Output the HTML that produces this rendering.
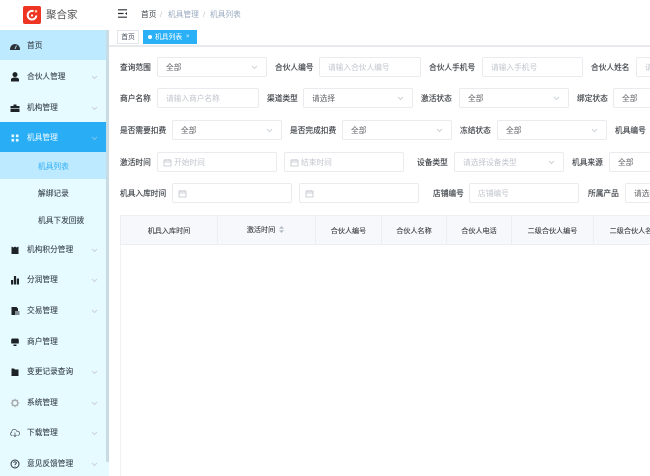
<!DOCTYPE html>
<html lang="zh">
<head>
<meta charset="utf-8">
<title>机具列表</title>
<style>
html,body{margin:0;padding:0;width:650px;height:476px;overflow:hidden;background:#fff}
body{position:relative;font-family:"Liberation Sans","Noto Sans CJK SC",sans-serif;font-size:7.7px;color:#606266}
#w{position:absolute;left:0;top:0;width:650px;height:476px;overflow:hidden;filter:blur(.3px)}
div,span{box-sizing:border-box}
.a{position:absolute;white-space:nowrap}
#side{position:absolute;left:0;top:30px;width:109px;height:446px;background:#e6fbff;overflow:hidden}
#bar{position:absolute;left:106px;top:30px;width:3px;height:432px;background:#c9dbe3}
.m{position:absolute;left:0;width:106px;color:#3a444c;white-space:nowrap;margin-top:1px;-webkit-text-stroke:.1px}
.m b{font-weight:normal;position:absolute;left:27px;top:0}
.m svg.i{position:absolute;left:10px;width:10px;height:10px}
.m svg.c{position:absolute;left:91px;width:7px;height:5px}
.s{position:absolute;left:38px;color:#3a444c;line-height:12px;white-space:nowrap;margin-top:1px;-webkit-text-stroke:.1px}
.l{position:absolute;height:20px;line-height:20px;padding-top:1px;color:#3f4348;white-space:nowrap;-webkit-text-stroke:.15px}
.f{position:absolute;height:20px;background:#fff;border:1px solid #e9ebef;border-radius:2px;line-height:20px;padding-left:8px;color:#606266;white-space:nowrap;overflow:hidden}
.p{color:#c0c4cc}
.f svg.c{position:absolute;right:8px;top:7px;width:7px;height:5px}
.f svg.d{position:absolute;left:5px;top:5px;width:9px;height:9px}
.d2{padding-left:16px}
.th{position:absolute;top:215px;height:30px;background:#f6f8fb;border-right:1px solid #eceef2;border-top:1px solid #eceef2;border-bottom:1px solid #eceef2;line-height:29px;font-size:7.1px;text-align:center;color:#3f4348;-webkit-text-stroke:.12px;white-space:nowrap;overflow:hidden}
</style>
</head>
<body>
<svg style="position:absolute;width:0;height:0">
<defs>
<symbol id="cv" viewBox="0 0 7 5"><path d="M1 1l2.500 2.500L6 1" fill="none" stroke="#cdd3d8" stroke-width="1"/></symbol>
<symbol id="cal" viewBox="0 0 9 9"><path d="M1 2h7v6H1zM1 4h7M3 1v2M6 1v2" fill="none" stroke="#c0c4cc" stroke-width=".8"/></symbol>
</defs>
</svg>
<div id="w">

<!-- top header -->
<svg class="a" style="left:23px;top:6px;width:18px;height:18px" viewBox="0 0 18 18">
<rect width="18" height="18" rx="2" fill="#ee3423"/>
<path d="M10.500 5.200A4.300 4.300 0 1 0 13.300 9.500" fill="none" stroke="#fff" stroke-width="2"/>
<circle cx="13" cy="5.300" r="1.300" fill="#ffc9b0"/>
<circle cx="9" cy="9.500" r="1.100" fill="#fff"/>
</svg>
<div class="a" style="left:46px;top:6px;line-height:18px;font-size:10.500px;color:#555">聚合家</div>
<svg class="a" style="left:118px;top:9px;width:9px;height:9px" viewBox="0 0 9 9"><path d="M0 .8h9M0 4.500h5.500M0 8.200h9" stroke="#2b2f33" stroke-width="1.200" fill="none"/><path d="M9 3L7 4.500 9 6z" fill="#2b2f33"/></svg>
<div class="a" style="left:141px;top:9px;line-height:12px;color:#3f444a">首页</div>
<div class="a" style="left:160px;top:9px;line-height:12px;color:#c0c4cc">/</div>
<div class="a" style="left:168px;top:9px;line-height:12px;color:#97a8be">机具管理</div>
<div class="a" style="left:203px;top:9px;line-height:12px;color:#c0c4cc">/</div>
<div class="a" style="left:210px;top:9px;line-height:12px;color:#97a8be">机具列表</div>

<!-- tabs -->
<div class="a" style="left:109px;top:45px;width:541px;height:2px;background:#e8eaed"></div>
<div class="a" style="left:117px;top:30px;width:22px;height:14px;background:#fff;border:1px solid #e4e7ed;font-size:6.800px;line-height:14px;text-align:center;color:#495060">首页</div>
<div class="a" style="left:143px;top:30px;width:54px;height:14px;background:#29b0f7;color:#fff;font-size:6.800px;line-height:15px;padding-left:12px">机具列表<span class="a" style="left:5px;top:5px;width:4px;height:4px;border-radius:50%;background:#fff"></span><span class="a" style="left:43px;top:0;font-size:6px">×</span></div>

<!-- sidebar -->
<div id="side">
<div class="a" style="left:0;top:0;width:106px;height:30px;background:#bdeaff"></div>
<div class="a" style="left:0;top:92px;width:106px;height:30px;background:#29aef6"></div>
<div class="a" style="left:0;top:122px;width:106px;height:27px;background:#bdeaff"></div>
</div>
<div id="bar"></div>

<div class="m" style="top:39px;height:12px;line-height:12px"><b>首页</b>
<svg class="i" style="top:1px" viewBox="0 0 10 10"><path d="M0 8a5 5 0 0 1 10 0v1H0z" fill="#2b3238"/><path d="M5 8L6.500 4.500" stroke="#bdeaff" stroke-width=".9"/></svg></div>
<div class="m" style="top:70px;height:12px;line-height:12px"><b>合伙人管理</b>
<svg class="i" style="top:1px" viewBox="0 0 10 10"><circle cx="5" cy="2.600" r="2.500" fill="#1d2226"/><path d="M1 9.500V7.500C1 6 3 5.500 5 5.500S9 6 9 7.500v2z" fill="#1d2226"/></svg>
<svg class="c" style="top:4px"><use href="#cv"/></svg></div>
<div class="m" style="top:101px;height:12px;line-height:12px"><b>机构管理</b>
<svg class="i" style="top:1px" viewBox="0 0 10 10"><path d="M3.500 3V1.500h3V3H9.500V5H.5V3zM.5 5.600h9V9H.5z" fill="#1d2226"/></svg>
<svg class="c" style="top:4px"><use href="#cv"/></svg></div>
<div class="m" style="top:131px;height:12px;line-height:12px;color:#dff4ff"><b>机具管理</b>
<svg class="i" style="top:1px" viewBox="0 0 10 10"><path d="M1.500 1.500h2.600v2.600H1.500zM5.900 1.500h2.600v2.600H5.900zM1.500 5.900h2.600v2.600H1.500zM5.900 5.900h2.600v2.600H5.900z" fill="#eaf8ff"/></svg>
<svg class="c" style="top:4px;opacity:.5"><use href="#cv"/></svg></div>
<div class="s" style="top:160px;color:#40b4f6">机具列表</div>
<div class="s" style="top:187px">解绑记录</div>
<div class="s" style="top:214px">机具下发回拨</div>
<div class="m" style="top:243px;height:12px;line-height:12px"><b>机构积分管理</b>
<svg class="i" style="top:1px" viewBox="0 0 10 10"><path d="M1.500 1.500l2 1 1.500-1 1.500 1 2-1V9h-7z" fill="#1d2226"/></svg>
<svg class="c" style="top:4px"><use href="#cv"/></svg></div>
<div class="m" style="top:273px;height:12px;line-height:12px"><b>分润管理</b>
<svg class="i" style="top:1px" viewBox="0 0 10 10"><path d="M1 5h2.200v4.500H1zM3.900 1h2.200v8.500H3.900zM6.800 3.500H9v6H6.800z" fill="#1d2226"/></svg>
<svg class="c" style="top:4px"><use href="#cv"/></svg></div>
<div class="m" style="top:304px;height:12px;line-height:12px"><b>交易管理</b>
<svg class="i" style="top:1px" viewBox="0 0 10 10"><path d="M1.500 1h5l1.500 1.500V5H5.500v4h-4z" fill="#1d2226"/><path d="M6 6h3.500M6 8h3.500" stroke="#1d2226" stroke-width="1"/></svg>
<svg class="c" style="top:4px"><use href="#cv"/></svg></div>
<div class="m" style="top:335px;height:12px;line-height:12px"><b>商户管理</b>
<svg class="i" style="top:1px" viewBox="0 0 10 10"><path d="M2 1.500h6l.8 1V6.500H1.200V2.500z" fill="#1d2226"/><path d="M3.500 7.500h3V9h-3z" fill="#1d2226"/></svg></div>
<div class="m" style="top:365px;height:12px;line-height:12px"><b>变更记录查询</b>
<svg class="i" style="top:1px" viewBox="0 0 10 10"><path d="M1.500 1.500h2.500l1 1h3.500V9h-7z" fill="#1d2226"/></svg>
<svg class="c" style="top:4px"><use href="#cv"/></svg></div>
<div class="m" style="top:396px;height:12px;line-height:12px"><b>系统管理</b>
<svg class="i" style="top:1px" viewBox="0 0 10 10"><circle cx="5" cy="5" r="2.800" fill="none" stroke="#a9adb0" stroke-width="1.600"/><path d="M5 .8v1.400M5 7.800v1.400M.8 5h1.400M7.800 5h1.400M2 2l1 1M7 7l1 1M8 2L7 3M3 7L2 8" stroke="#a9adb0" stroke-width="1"/></svg>
<svg class="c" style="top:4px"><use href="#cv"/></svg></div>
<div class="m" style="top:426px;height:12px;line-height:12px"><b>下载管理</b>
<svg class="i" style="top:1px" viewBox="0 0 10 10"><path d="M2.500 7.500H2a1.700 1.700 0 0 1-.3-3.300A2.600 2.600 0 0 1 6.800 3.300 2.100 2.100 0 0 1 8 7.500h-.5" fill="none" stroke="#5b6268" stroke-width=".8"/><path d="M5 4.500v4M3.500 7L5 8.700 6.500 7" fill="none" stroke="#5b6268" stroke-width=".8"/></svg>
<svg class="c" style="top:4px"><use href="#cv"/></svg></div>
<div class="m" style="top:457px;height:12px;line-height:12px"><b>意见反馈管理</b>
<svg class="i" style="top:1px" viewBox="0 0 10 10"><circle cx="5" cy="5" r="4" fill="none" stroke="#2b3238" stroke-width="1"/><path d="M3.700 3.800C3.900 2.500 6.300 2.500 6.300 3.900 6.300 4.900 5 4.900 5 6" fill="none" stroke="#2b3238" stroke-width=".9"/><path d="M4.600 6.800h.8v.8h-.8z" fill="#2b3238"/></svg>
<svg class="c" style="top:4px"><use href="#cv"/></svg></div>

<!-- row 1 -->
<div class="l" style="left:120px;top:57px">查询范围</div>
<div class="f" style="left:157px;top:57px;width:110px">全部<svg class="c"><use href="#cv"/></svg></div>
<div class="l" style="left:275px;top:57px">合伙人编号</div>
<div class="f p" style="left:319px;top:57px;width:102px">请输入合伙人编号</div>
<div class="l" style="left:429px;top:57px">合伙人手机号</div>
<div class="f p" style="left:482px;top:57px;width:101px">请输入手机号</div>
<div class="l" style="left:591px;top:57px">合伙人姓名</div>
<div class="f p" style="left:636px;top:57px;width:40px">请输入</div>

<!-- row 2 -->
<div class="l" style="left:120px;top:88px">商户名称</div>
<div class="f p" style="left:157px;top:88px;width:102px">请输入商户名称</div>
<div class="l" style="left:267px;top:88px">渠道类型</div>
<div class="f" style="left:303px;top:88px;width:110px">请选择<svg class="c"><use href="#cv"/></svg></div>
<div class="l" style="left:421px;top:88px">激活状态</div>
<div class="f" style="left:459px;top:88px;width:110px">全部<svg class="c"><use href="#cv"/></svg></div>
<div class="l" style="left:577px;top:88px">绑定状态</div>
<div class="f" style="left:613px;top:88px;width:60px">全部</div>

<!-- row 3 -->
<div class="l" style="left:120px;top:120px">是否需要扣费</div>
<div class="f" style="left:172px;top:120px;width:110px">全部<svg class="c"><use href="#cv"/></svg></div>
<div class="l" style="left:290px;top:120px">是否完成扣费</div>
<div class="f" style="left:342px;top:120px;width:110px">全部<svg class="c"><use href="#cv"/></svg></div>
<div class="l" style="left:460px;top:120px">冻结状态</div>
<div class="f" style="left:497px;top:120px;width:110px">全部<svg class="c"><use href="#cv"/></svg></div>
<div class="l" style="left:615px;top:120px">机具编号</div>

<!-- row 4 -->
<div class="l" style="left:120px;top:152px">激活时间</div>
<div class="f p d2" style="left:157px;top:152px;width:120px"><svg class="d"><use href="#cal"/></svg>开始时间</div>
<div class="f p d2" style="left:284px;top:152px;width:120px"><svg class="d"><use href="#cal"/></svg>结束时间</div>
<div class="l" style="left:417px;top:152px">设备类型</div>
<div class="f p" style="left:454px;top:152px;width:110px">请选择设备类型<svg class="c"><use href="#cv"/></svg></div>
<div class="l" style="left:572px;top:152px">机具来源</div>
<div class="f" style="left:609px;top:152px;width:60px">全部</div>

<!-- row 5 -->
<div class="l" style="left:120px;top:183px">机具入库时间</div>
<div class="f d2" style="left:172px;top:183px;width:120px"><svg class="d"><use href="#cal"/></svg></div>
<div class="f d2" style="left:299px;top:183px;width:120px"><svg class="d"><use href="#cal"/></svg></div>
<div class="l" style="left:433px;top:183px">店铺编号</div>
<div class="f p" style="left:469px;top:183px;width:110px">店铺编号</div>
<div class="l" style="left:588px;top:183px">所属产品</div>
<div class="f" style="left:625px;top:183px;width:60px">请选择</div>

<!-- table -->
<div class="th" style="left:120px;width:98px;border-left:1px solid #eceef2;line-height:30px">机具入库时间</div>
<div class="th" style="left:218px;width:98px;padding-right:2px">激活时间
<svg style="width:5px;height:7px;vertical-align:-1px;margin-left:2px" viewBox="0 0 5 7"><path d="M2.500 0L5 2.800H0zM2.500 7L0 4.200h5z" fill="#b4bac4"/></svg></div>
<div class="th" style="left:316px;width:66px;line-height:30px">合伙人编号</div>
<div class="th" style="left:382px;width:65px;line-height:30px">合伙人名称</div>
<div class="th" style="left:447px;width:65px;line-height:30px">合伙人电话</div>
<div class="th" style="left:512px;width:82px;line-height:30px">二级合伙人编号</div>
<div class="th" style="left:594px;width:82px;line-height:30px">二级合伙人名称</div>
<div class="a" style="left:120px;top:245px;width:1px;height:231px;background:#f0f2f5"></div>
</div>
</body>
</html>
